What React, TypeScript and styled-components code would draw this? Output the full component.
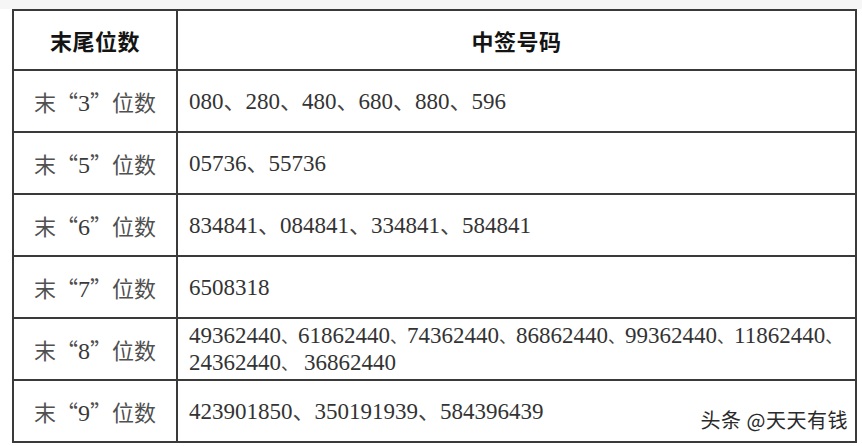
import React from "react";
import styled, { createGlobalStyle, css } from "styled-components";

const Global = createGlobalStyle`
  html, body { margin: 0; padding: 0; background: #ffffff; }
  body { width: 862px; height: 446px; overflow: hidden; }
`;

const Page = styled.div`
  position: relative;
  width: 862px;
  height: 446px;
  background: #ffffff;
  display: flex;
  flex-direction: column;
`;

const TopStrip = styled.div`
  height: 9px;
  background: #f6f6f6;
  flex: none;
`;

const Table = styled.div`
  margin-left: 12px;
  width: 845px;
  display: grid;
  grid-template-columns: 162px 677px;
  grid-template-rows: 58px;
  grid-auto-rows: 60px;
  gap: 2px;
  padding: 2px;
  box-sizing: border-box;
  background: #3a3a3a;
`;

const Cell = styled.div<{ $center?: boolean }>`
  background: #ffffff;
  display: flex;
  flex-direction: column;
  justify-content: center;
  align-items: ${(p) => (p.$center ? "center" : "flex-start")};
  padding: ${(p) => (p.$center ? "0" : "0 0 0 11px")};
  box-sizing: border-box;
  overflow: hidden;
`;

const HeadText = styled.span`
  font-family: "Noto Sans CJK SC", sans-serif;
  font-weight: 700;
  font-size: 22px;
  color: #141414;
  letter-spacing: 0.5px;
`;

const Label = styled.span`
  font-family: "Noto Sans CJK SC", sans-serif;
  font-weight: 400;
  font-size: 22px;
  color: #505050;
  white-space: nowrap;
`;

const Digit = styled.span`
  font-family: "Liberation Serif", serif;
  font-size: 24px;
  color: #3a3a3a;
`;

const Numbers = styled.div`
  font-family: "Liberation Serif", "Noto Sans CJK SC", serif;
  font-size: 23px;
  line-height: 27px;
  color: #333333;
  white-space: nowrap;
`;

const Line = styled.div`
  height: 27px;
`;

type SepVariant = "normal" | "tight" | "loose";

const Sep = styled.span<{ $variant: SepVariant }>`
  font-family: "Noto Sans CJK SC", sans-serif;
  font-size: 22px;
  line-height: 1;
  color: #444;
  ${(p) =>
    p.$variant !== "normal" &&
    css`
      font-size: 17px;
    `}
  ${(p) =>
    p.$variant === "loose" &&
    css`
      margin-right: 6px;
    `}
`;

const Watermark = styled.div`
  position: absolute;
  right: 14px;
  top: 405px;
  font-family: "Noto Sans CJK SC", sans-serif;
  font-size: 20px;
  color: #2a2a2a;
  text-shadow: 1px 0 0 #fff, -1px 0 0 #fff, 0 1px 0 #fff, 0 -1px 0 #fff,
    1px 1px 1px rgba(255,255,255,0.9);
  letter-spacing: 0.5px;
  white-space: nowrap;
`;

type Row = { d: string; lines: string[][] };

const rows: Row[] = [
  { d: "3", lines: [["080", "280", "480", "680", "880", "596"]] },
  { d: "5", lines: [["05736", "55736"]] },
  { d: "6", lines: [["834841", "084841", "334841", "584841"]] },
  { d: "7", lines: [["6508318"]] },
  {
    d: "8",
    lines: [
      ["49362440", "61862440", "74362440", "86862440", "99362440", "11862440", ""],
      ["24362440", "36862440"],
    ],
  },
  { d: "9", lines: [["423901850", "350191939", "584396439"]] },
];

function NumberLine({ items, variant }: { items: string[]; variant: SepVariant }) {
  return (
    <Line>
      {items.map((n, i) => (
        <React.Fragment key={i}>
          {i > 0 && <Sep $variant={variant}>、</Sep>}
          {n}
        </React.Fragment>
      ))}
    </Line>
  );
}

export default function App() {
  return (
    <Page lang="zh-CN">
      <Global />
      <TopStrip />
      <Table>
        <Cell $center>
          <HeadText>末尾位数</HeadText>
        </Cell>
        <Cell $center>
          <HeadText>中签号码</HeadText>
        </Cell>
        {rows.map((r) => (
          <React.Fragment key={r.d}>
            <Cell $center>
              <Label>
                末“<Digit>{r.d}</Digit>”位数
              </Label>
            </Cell>
            <Cell>
              <Numbers>
                {r.lines.map((l, i) => (
                  <NumberLine
                    key={i}
                    items={l}
                    variant={r.lines.length === 1 ? "normal" : i === 0 ? "tight" : "loose"}
                  />
                ))}
              </Numbers>
            </Cell>
          </React.Fragment>
        ))}
      </Table>
      <Watermark>头条 @天天有钱</Watermark>
    </Page>
  );
}
